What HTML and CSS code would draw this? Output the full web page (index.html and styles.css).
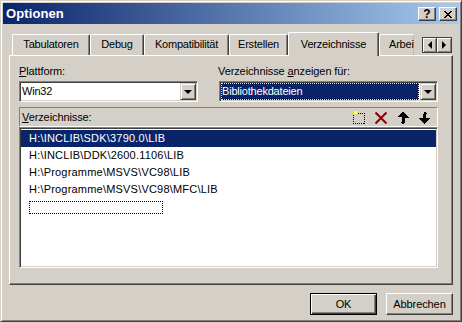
FILE: index.html
```html
<!DOCTYPE html>
<html>
  <head>
    <meta charset="utf-8" />
    <link rel="stylesheet" href="styles.css">
  </head>
  <body>
    <div class="window">
      <div class="titlebar">
        <span class="title">Optionen</span>
        <div class="caption-buttons">
          <div class="cap-btn help">?</div>
          <div class="cap-btn close">
            <svg width="8" height="7" viewBox="0 0 8 7" shape-rendering="crispEdges">
              <path d="M0 0h2v1h-2zM6 0h2v1h-2zM1 1h2v1h-2zM5 1h2v1h-2zM2 2h4v1h-4zM3 3h2v1h-2zM2 4h4v1h-4zM1 5h2v1h-2zM5 5h2v1h-2zM0 6h2v1h-2zM6 6h2v1h-2z" fill="#000"/>
            </svg>
          </div>
        </div>
      </div>

      <div class="tabrow">
        <div class="tabs">
          <div class="tab tab-tabulatoren">Tabulatoren</div>
          <div class="tab tab-debug">Debug</div>
          <div class="tab tab-kompat">Kompatibilität</div>
          <div class="tab tab-erstellen">Erstellen</div>
          <div class="tab tab-verz active">Verzeichnisse</div>
          <div class="tab tab-arbeit">Arbei</div>
        </div>
        <div class="tab-scroll">
          <div class="spin"><span class="arrow-left"></span></div>
          <div class="spin"><span class="arrow-right"></span></div>
        </div>
      </div>

      <div class="panel">
        <div class="field-grid">
          <div class="field-label"><u>P</u>lattform:</div>
          <div class="field-label">Verzeichnisse <u>a</u>nzeigen für:</div>
          <div class="combo">
            <span class="combo-text">Win32</span>
            <span class="drop-btn"><span class="arrow-down"></span></span>
          </div>
          <div class="combo">
            <span class="combo-text selected">Bibliothekdateien</span>
            <span class="drop-btn"><span class="arrow-down"></span></span>
          </div>
        </div>

        <div class="dir-header">
          <span class="dir-label"><u>V</u>erzeichnisse:</span>
          <div class="dir-tools">
            <svg width="16" height="16" viewBox="0 0 16 16" shape-rendering="crispEdges">
              <rect x="2.5" y="4.5" width="11" height="10" fill="none" stroke="#000" stroke-dasharray="1 1"/>
              <path d="M4 1h1v6h-1zM1 3h7v1h-7zM2 1h1v1h-1zM6 1h1v1h-1zM2 5h1v1h-1zM6 5h1v1h-1z" fill="#e8e800"/>
              <path d="M3 2h3v3h-3z" fill="#ffff80"/>
            </svg>
            <svg width="16" height="16" viewBox="0 0 16 16">
              <path d="M2.5 3.5l11 11M13.5 3.5l-11 11" stroke="#8c0000" stroke-width="2"/>
            </svg>
            <svg width="16" height="16" viewBox="0 0 16 16" shape-rendering="crispEdges">
              <path d="M8 3h1v1h1v1h1v1h1v1h1v1h1v1h-4v5h-1v1h-2v-1h-1v-1h1v-5h-4v-1h1v-1h1v-1h1v-1h1v-1h1z" fill="#000"/>
            </svg>
            <svg width="16" height="16" viewBox="0 0 16 16" shape-rendering="crispEdges">
              <path d="M7 3h2v1h1v1h-1v4h4v1h-1v1h-1v1h-1v1h-1v1h-1v1h-1v-1h-1v-1h-1v-1h-1v-1h-1v-1h-1v-1h4v-4h1z" fill="#000"/>
            </svg>
          </div>
        </div>

        <ul class="dir-list">
          <li class="dir-row selected">H:\INCLIB\SDK\3790.0\LIB</li>
          <li class="dir-row">H:\INCLIB\DDK\2600.1106\LIB</li>
          <li class="dir-row">H:\Programme\MSVS\VC98\LIB</li>
          <li class="dir-row">H:\Programme\MSVS\VC98\MFC\LIB</li>
          <li class="dir-row"><span class="new-entry"></span></li>
        </ul>
      </div>

      <div class="buttons">
        <div class="btn default">OK</div>
        <div class="btn">Abbrechen</div>
      </div>
    </div>
  </body>
</html>
```

FILE: styles.css
```css
:root {
  --face: #d4d0c8;
  --light: #ffffff;
  --shadow: #808080;
  --dark: #404040;
  --select: #0a246a;
}

* {
  box-sizing: border-box;
  margin: 0;
  padding: 0;
}

body {
  background: var(--face);
  font-family: "Liberation Sans", Arial, sans-serif;
  font-size: 11px;
  color: #000;
}

u {
  text-decoration: underline;
  text-underline-offset: 1px;
}

/* Window frame */
.window {
  width: 462px;
  height: 322px;
  padding: 2px;
  background: var(--face);
  border: 1px solid;
  border-color: var(--face) var(--dark) var(--dark) var(--face);
  box-shadow: inset 1px 1px var(--light), inset -1px -1px var(--shadow);
}

.titlebar {
  height: 21px;
  display: flex;
  align-items: center;
  justify-content: space-between;
  padding: 0 2px 0 3px;
  background: linear-gradient(to right, #0a246a, #a6caf0);
}

.title {
  color: #fff;
  font-weight: bold;
  font-size: 13px;
  letter-spacing: 0.1px;
}

.caption-buttons {
  display: flex;
  gap: 3px;
  margin-top: 1px;
}

.cap-btn {
  width: 18px;
  height: 14px;
  display: flex;
  align-items: center;
  justify-content: center;
  background: var(--face);
  border: 1px solid;
  border-color: var(--light) var(--dark) var(--dark) var(--light);
  box-shadow: inset -1px -1px var(--shadow);
  font-weight: bold;
  font-size: 12px;
  line-height: 12px;
}

/* Tabs */
.tabrow {
  display: flex;
  align-items: flex-end;
  height: 24px;
  margin: 8px 0 0 6px;
  position: relative;
  z-index: 1;
}

.tabs {
  display: flex;
  align-items: flex-end;
  width: 405px;
  height: 24px;
  padding-left: 3px;
  overflow: hidden;
}

.tab {
  flex: none;
  height: 21px;
  margin-bottom: 1px;
  padding-top: 3px;
  text-align: center;
  line-height: 13px;
  letter-spacing: -0.2px;
  white-space: nowrap;
  background: var(--face);
  border-top: 1px solid var(--light);
  border-left: 1px solid var(--light);
  border-right: 1px solid var(--dark);
  border-top-left-radius: 2px;
  border-top-right-radius: 2px;
  box-shadow: inset -1px 0 var(--shadow);
}

.tab.active {
  height: 24px;
  margin-bottom: 0;
  padding-top: 5px;
}

.tab-tabulatoren { width: 78px; }
.tab-debug { width: 54px; }
.tab-kompat { width: 85px; }
.tab-erstellen { width: 59px; }
.tab-verz { width: 91px; }
.tab-arbeit {
  width: 35px;
  text-align: left;
  padding-left: 9px;
  border-right: 1px dotted #a8a49c;
  border-top-right-radius: 0;
  box-shadow: none;
}

.tab-scroll {
  display: flex;
  align-self: flex-start;
  margin: 5px 0 0 8px;
}

.spin {
  width: 15px;
  height: 16px;
  display: flex;
  align-items: center;
  justify-content: center;
  background: var(--face);
  border: 1px solid var(--dark);
  box-shadow: inset 1px 1px var(--light), inset -1px -1px var(--shadow);
}

.spin + .spin {
  border-left: none;
}

.arrow-left {
  border-top: 4px solid transparent;
  border-bottom: 4px solid transparent;
  border-right: 4px solid #000;
}

.arrow-right {
  border-top: 4px solid transparent;
  border-bottom: 4px solid transparent;
  border-left: 4px solid #000;
}

.arrow-down {
  border-left: 4px solid transparent;
  border-right: 4px solid transparent;
  border-top: 4px solid #000;
}

/* Tab page */
.panel {
  width: 444px;
  height: 230px;
  margin: -1px 0 0 6px;
  padding: 9px 0 0 9px;
  border-top: 1px solid var(--light);
  border-left: 1px solid var(--light);
  border-right: 1px solid var(--dark);
  border-bottom: 1px solid var(--dark);
  box-shadow: inset -1px -1px var(--shadow);
}

.field-grid {
  display: grid;
  grid-template-columns: 179px 219px;
  column-gap: 21px;
  row-gap: 3px;
}

.field-label {
  line-height: 13px;
  letter-spacing: -0.1px;
}

.field-label + .field-label {
  margin-left: -1px;
}

.combo {
  height: 21px;
  display: flex;
  background: #fff;
  border: 1px solid;
  border-color: var(--shadow) var(--light) var(--light) var(--shadow);
  box-shadow: inset 1px 1px var(--dark), inset -1px -1px var(--face);
  padding: 1px;
}

.combo-text {
  flex: 1;
  margin-right: 1px;
  border: 1px solid transparent;
  line-height: 15px;
  letter-spacing: -0.2px;
}

.combo-text.selected {
  color: #fff;
  border: 1px dotted #f0f080;
  background: linear-gradient(var(--select), var(--select)) padding-box, #000 border-box;
}

.drop-btn {
  width: 16px;
  height: 17px;
  display: flex;
  align-items: center;
  justify-content: center;
  background: var(--face);
  border: 1px solid;
  border-color: var(--face) var(--dark) var(--dark) var(--face);
  box-shadow: inset 1px 1px var(--light), inset -1px -1px var(--shadow);
}

/* Directory list */
.dir-header {
  width: 419px;
  height: 20px;
  margin-top: 5px;
  display: flex;
  align-items: center;
  padding: 0 4px 0 2px;
  border: 1px solid;
  border-color: var(--shadow) var(--light) var(--light) var(--shadow);
}

.dir-label {
  line-height: 18px;
  letter-spacing: -0.1px;
}

.dir-tools {
  display: flex;
  gap: 6px;
  margin-left: auto;
}

.dir-list {
  list-style: none;
  width: 419px;
  height: 141px;
  background: #fff;
  border: 1px solid;
  border-color: var(--shadow) var(--light) var(--light) var(--shadow);
  box-shadow: inset 1px 1px var(--dark), inset -1px -1px var(--face);
  padding: 2px 1px 0 1px;
}

.dir-row {
  height: 17px;
  line-height: 17px;
  padding-left: 8px;
  letter-spacing: 0.2px;
  white-space: nowrap;
}

.dir-row.selected {
  background: var(--select);
  color: #fff;
}

.new-entry {
  display: block;
  width: 134px;
  height: 13px;
  margin-top: 3px;
  border: 1px dotted #000;
}

/* Dialog buttons */
.buttons {
  display: flex;
  justify-content: flex-end;
  gap: 9px;
  margin: 8px 6px 0 0;
}

.btn {
  width: 67px;
  height: 22px;
  display: flex;
  align-items: center;
  justify-content: center;
  background: var(--face);
  border: 1px solid;
  border-color: var(--light) var(--dark) var(--dark) var(--light);
  box-shadow: inset -1px -1px var(--shadow);
  letter-spacing: -0.1px;
}

.btn.default {
  border-color: #000;
  box-shadow: inset 1px 1px var(--light), inset -1px -1px var(--dark), inset -2px -2px var(--shadow);
}
```
